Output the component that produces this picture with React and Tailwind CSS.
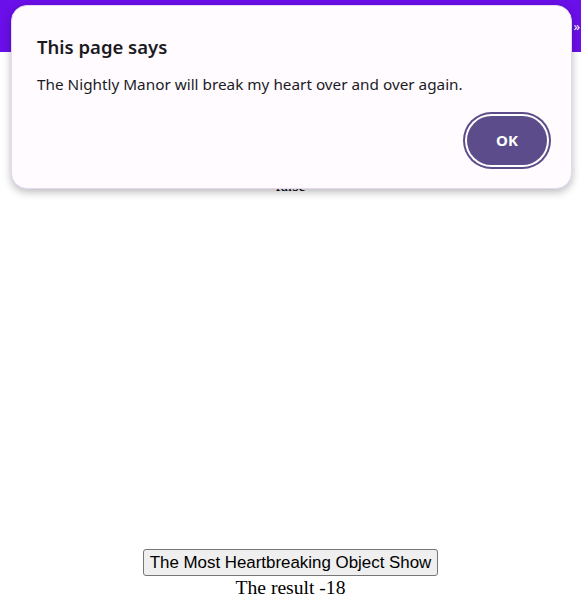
import React from 'react';

const App = () => {
  return (
    <div className="relative w-[581px] h-[603px] bg-white overflow-hidden">
      <div className="h-[52px] bg-[#6a0fe9] flex justify-end items-center pr-[1px]">
        <span className="text-white text-[13px] leading-none font-['Noto_Sans',sans-serif]">»</span>
      </div>
      <div className="flex flex-col items-center font-['Liberation_Serif',serif] text-black">
        <div className="mt-[124px] h-[20px] text-[16px] leading-[20px]">false</div>
        <div className="h-[353px]"></div>
        <button className="px-[6px] h-[27px] bg-[#efefef] border border-[#767676] rounded-[3px] text-[16.9px] font-['Liberation_Sans',sans-serif] text-black">
          The Most Heartbreaking Object Show
        </button>
        <div className="text-[19.6px] leading-[24px]">The result -18</div>
      </div>

      <div className="absolute left-[11px] top-[5px] w-[561px] h-[184px] rounded-[16px] bg-[#fffbff] border border-[#e4d8f4] shadow-[0_3px_8px_rgba(0,0,0,0.28)] font-['Noto_Sans',sans-serif] text-[#1b1b1f]">
        <div className="pl-[25px] pt-[28px]">
          <div className="text-[18.5px] font-semibold leading-[26px]">This page says</div>
          <div className="mt-[14px] text-[15.3px] leading-[20px]">The Nightly Manor will break my heart over and over again.</div>
        </div>
        <div className="flex justify-end pr-[24px] mt-[22px]">
          <button className="w-[80px] h-[49px] rounded-full bg-[#5d4c8b] text-white text-[15px] font-bold ring-2 ring-[#5d4c8b] ring-offset-2 ring-offset-white">
            OK
          </button>
        </div>
      </div>
    </div>
  );
};

export default App;
